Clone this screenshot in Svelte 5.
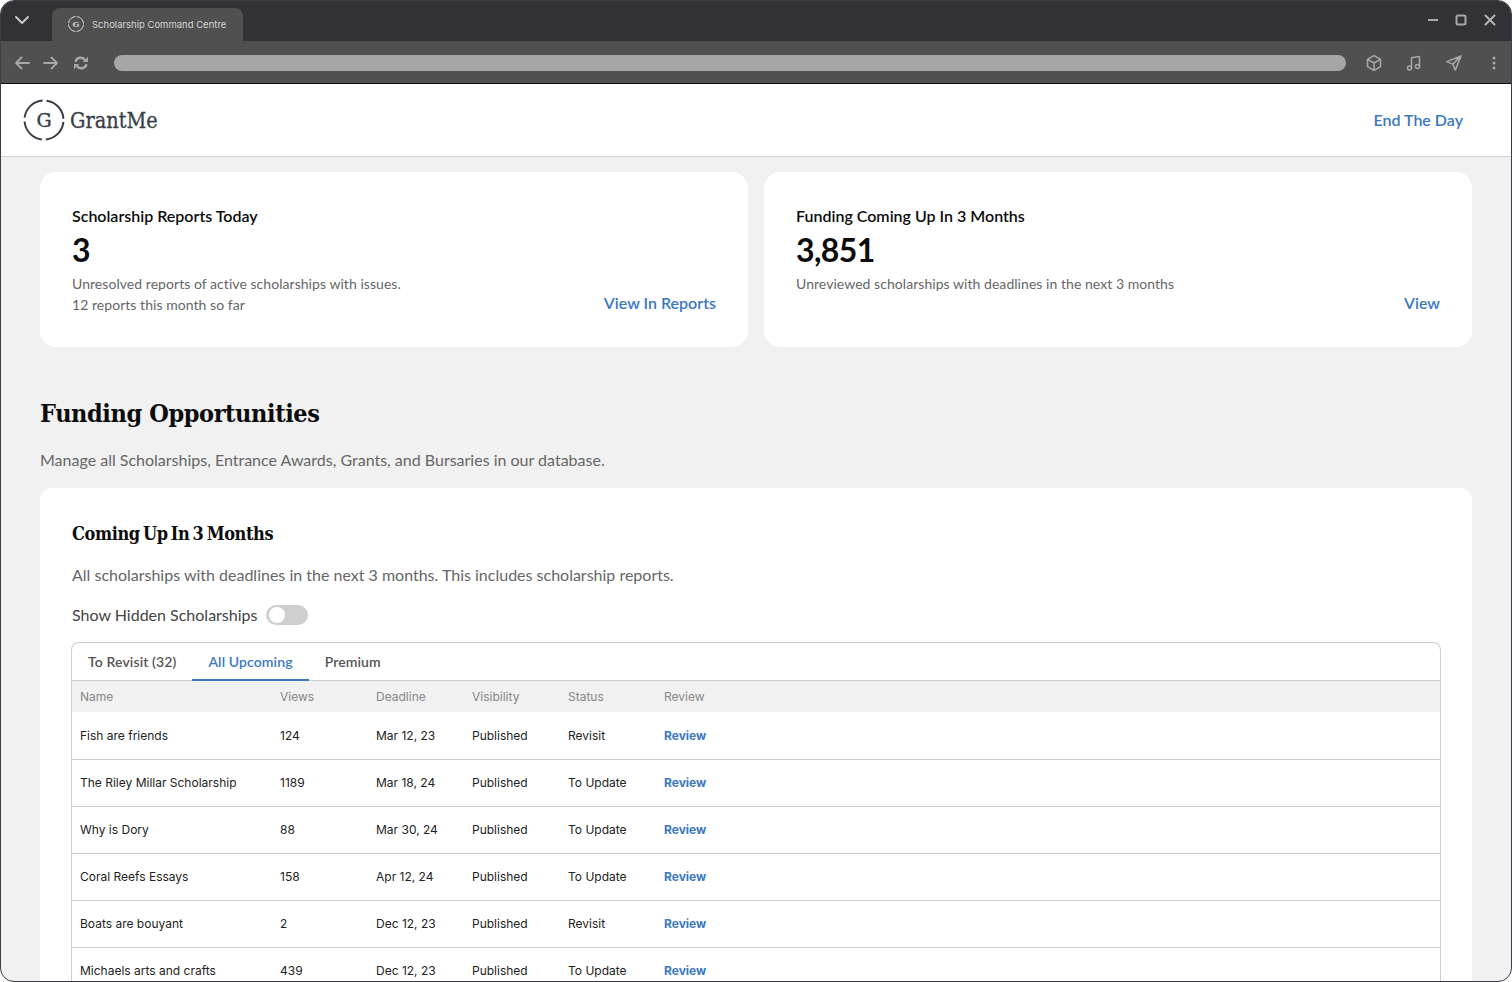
<script>
  const rows = [
    ['Fish are friends', '124', 'Mar 12, 23', 'Published', 'Revisit'],
    ['The Riley Millar Scholarship', '1189', 'Mar 18, 24', 'Published', 'To Update'],
    ['Why is Dory', '88', 'Mar 30, 24', 'Published', 'To Update'],
    ['Coral Reefs Essays', '158', 'Apr 12, 24', 'Published', 'To Update'],
    ['Boats are bouyant', '2', 'Dec 12, 23', 'Published', 'Revisit'],
    ['Michaels arts and crafts', '439', 'Dec 12, 23', 'Published', 'To Update']
  ];
  const heads = ['Name', 'Views', 'Deadline', 'Visibility', 'Status', 'Review'];
</script>

<div class="window">
  <div class="titlebar">
    <svg class="chev" width="16" height="10" viewBox="0 0 16 10"><path d="M2 2l6 6 6-6" fill="none" stroke="#c9c9c9" stroke-width="2" stroke-linecap="round" stroke-linejoin="round"/></svg>
    <div class="tab">
      <svg width="18" height="18" viewBox="0 0 18 18">
        <circle cx="9" cy="9" r="7.5" fill="none" stroke="#d8d8d8" stroke-width="1" stroke-dasharray="10.48 1.3" stroke-dashoffset="-0.65"/>
        <text x="9" y="12" text-anchor="middle" class="tabg">G</text>
      </svg>
      <span>Scholarship Command Centre</span>
    </div>
    <div class="winctl">
      <svg width="10" height="10" viewBox="0 0 10 10"><path d="M0 5h10" stroke="#a8a8a8" stroke-width="2"/></svg>
      <svg width="12" height="12" viewBox="0 0 12 12"><rect x="1.5" y="1.5" width="9" height="9" rx="1.5" fill="none" stroke="#a8a8a8" stroke-width="2"/></svg>
      <svg width="12" height="12" viewBox="0 0 12 12"><path d="M1.5 1.5l9 9M10.5 1.5l-9 9" stroke="#b4b4b4" stroke-width="2" stroke-linecap="round"/></svg>
    </div>
  </div>

  <div class="toolbar">
    <div class="navs">
      <svg width="16" height="14" viewBox="0 0 16 14"><path d="M15 7H2M7.5 1.5L2 7l5.5 5.500" fill="none" stroke="#a8a8a8" stroke-width="1.8" stroke-linecap="round" stroke-linejoin="round"/></svg>
      <svg width="16" height="14" viewBox="0 0 16 14"><path d="M1 7h13M8.500 1.500L14 7l-5.500 5.500" fill="none" stroke="#a8a8a8" stroke-width="1.800" stroke-linecap="round" stroke-linejoin="round"/></svg>
      <svg class="reload" width="16" height="14" viewBox="0 0 16 14"><path d="M2.500 5.800A5.200 5.200 0 0 1 12 4.200M13.500 8.200A5.200 5.200 0 0 1 4 9.800" fill="none" stroke="#a8a8a8" stroke-width="2.400"/><path d="M15 0.800v5.200h-5.200zM1 13.200V8h5.200z" fill="#a8a8a8"/></svg>
    </div>
    <div class="url"></div>
    <div class="tools">
      <svg width="18" height="18" viewBox="0 0 18 18"><path d="M9 1.600l6.500 3.700v7.400L9 16.400l-6.500-3.700V5.300zM2.700 5.400L9 9l6.300-3.600M9 9v7.200" fill="none" stroke="#a8a8a8" stroke-width="1.500" stroke-linejoin="round"/></svg>
      <svg width="18" height="18" viewBox="0 0 18 18"><path d="M6.500 14V3.800l8-1.300V12.500" fill="none" stroke="#a8a8a8" stroke-width="1.500" stroke-linejoin="round"/><circle cx="4.500" cy="14" r="2" fill="none" stroke="#a8a8a8" stroke-width="1.500"/><circle cx="12.500" cy="12.500" r="2" fill="none" stroke="#a8a8a8" stroke-width="1.500"/></svg>
      <svg width="18" height="18" viewBox="0 0 18 18"><path d="M16 2L1.800 7.600l6 2.500 2.500 6z M16 2L7.800 10.100" fill="none" stroke="#a8a8a8" stroke-width="1.500" stroke-linejoin="round"/></svg>
      <svg class="dots" width="4" height="14" viewBox="0 0 4 14"><circle cx="2" cy="2" r="1.500" fill="#a8a8a8"/><circle cx="2" cy="7" r="1.500" fill="#a8a8a8"/><circle cx="2" cy="12" r="1.500" fill="#a8a8a8"/></svg>
    </div>
  </div>

  <header class="apphead">
    <div class="logo">
      <svg width="42" height="42" viewBox="0 0 42 42">
        <circle cx="21" cy="21" r="19.5" fill="none" stroke="#3a3f47" stroke-width="2" stroke-dasharray="26.63 4" stroke-dashoffset="-2" />
        <text x="21" y="27.5" text-anchor="middle" class="logog">G</text>
      </svg>
      <span class="logotext">GrantMe</span>
    </div>
    <a class="endday" href="#end">End The Day</a>
  </header>

  <main class="content">
    <section class="stats">
      <article class="stat">
        <div>
          <h3>Scholarship Reports Today</h3>
          <div class="num">3</div>
          <p>Unresolved reports of active scholarships with issues.<br />12 reports this month so far</p>
        </div>
        <a href="#reports">View In Reports</a>
      </article>
      <article class="stat">
        <div>
          <h3>Funding Coming Up In 3 Months</h3>
          <div class="num">3,851</div>
          <p>Unreviewed scholarships with deadlines in the next 3 months<br />&nbsp;</p>
        </div>
        <a href="#view">View</a>
      </article>
    </section>

    <h1>Funding Opportunities</h1>
    <p class="lead">Manage all Scholarships, Entrance Awards, Grants, and Bursaries in our database.</p>

    <section class="panel">
      <h2>Coming Up In 3 Months</h2>
      <p class="sub">All scholarships with deadlines in the next 3 months. This includes scholarship reports.</p>
      <div class="toggle-row">
        <span>Show Hidden Scholarships</span>
        <span class="toggle"><span class="knob"></span></span>
      </div>
      <div class="tablebox">
        <div class="tabs">
          <span class="t">To Revisit (32)</span>
          <span class="t active">All Upcoming</span>
          <span class="t">Premium</span>
        </div>
        <div class="thead">
          {#each heads as h}<span>{h}</span>{/each}
        </div>
        {#each rows as r}
          <div class="row">
            {#each r as c}<span>{c}</span>{/each}
            <a href="#review">Review</a>
          </div>
        {/each}
      </div>
    </section>
  </main>
</div>

<style>
  :global(body) { margin: 0; background: #fff; overflow: hidden; }
  .window {
    box-sizing: border-box; width: 1512px; height: 982px; display: flex; flex-direction: column;
    overflow: hidden; border: 1px solid #3a3d42; border-radius: 14px; background: #f1f1f1;
    font-family: Lato, sans-serif;
  }
  .titlebar { flex: none; height: 40px; background: #323136; display: flex; align-items: flex-end; position: relative; }
  .chev { position: absolute; left: 13px; top: 14px; }
  .tab {
    margin-left: 51px; width: 191px; height: 33px; box-sizing: border-box; padding: 0 0 1px 15px; background: #505050;
    border-radius: 8px 8px 0 0; display: flex; align-items: center; gap: 7px;
    font: 9.5px Inter, sans-serif; color: #d4d4d4;
  }
  .tabg { font: 700 8px "DejaVu Serif", serif; fill: #d8d8d8; }
  .winctl { margin-left: auto; align-self: flex-start; display: flex; align-items: center; gap: 17px; padding: 13px 15px 0 0; }
  .toolbar { flex: none; height: 43px; box-sizing: border-box; background: #505050; border-bottom: 1px solid #0c0c0c; display: flex; align-items: center; padding: 2px 16px 0 13px; }
  .navs { display: flex; gap: 13px; width: 100px; flex: none; }
  .reload { margin-left: 1px; }
  .url { flex: none; width: 1232px; height: 16px; border-radius: 8px; background: #a6a6a6; }
  .tools { display: flex; align-items: center; gap: 22px; margin-left: 19px; }
  .dots { margin-left: 7px; }
  .apphead {
    flex: none; height: 73px; box-sizing: border-box; background: #fff; border-bottom: 1px solid #d2d2d2;
    display: flex; align-items: center; justify-content: space-between; padding: 0 48px 0 22px;
  }
  .logo { display: flex; align-items: center; gap: 5px; color: #3a3f47; }
  .logog { font: 400 19px "DejaVu Serif", serif; fill: #3a3f47; stroke: #3a3f47; stroke-width: 0.4px; }
  .logotext { font: 500 21.5px "DejaVu Serif Condensed", "DejaVu Serif", serif; -webkit-text-stroke: 0.3px #3a3f47; }
  .endday { font-size: 16px; font-weight: 600; color: #3b78c3; text-decoration: none; padding-bottom: 2px; }
  .content { flex: 1; min-height: 0; overflow: hidden; padding: 15px 39px 0; }
  .stats { display: grid; grid-template-columns: 708px 708px; gap: 16px; }
  .stat {
    height: 175px; box-sizing: border-box; background: #fff; border-radius: 16px; padding: 32px;
    display: flex; justify-content: space-between; align-items: flex-end;
  }
  .stat > div { align-self: flex-start; }
  .stat h3 { margin: 0; font-size: 16px; line-height: 24px; font-weight: 600; color: #0c0c0c; }
  .num { font-size: 32px; line-height: 42px; font-weight: 700; letter-spacing: -0.6px; color: #0c0c0c; margin-top: 1px; }
  .stat p { margin: 2px 0 0; font-size: 14px; line-height: 21px; letter-spacing: 0.05px; color: #666; }
  .stat a { font-size: 16px; font-weight: 600; color: #3b78c3; text-decoration: none; line-height: 24px; }
  h1 { margin: 47px 0 0; font: 700 25px/40px "DejaVu Serif Condensed", "DejaVu Serif", serif; letter-spacing: -0.4px; color: #0c0c0c; }
  .lead { margin: 14px 0 0; font-size: 16px; line-height: 24px; color: #666; }
  .panel { margin-top: 16px; background: #fff; border-radius: 12px 12px 0 0; padding: 32px 31px 0 32px; height: 600px; box-sizing: border-box; }
  h2 { margin: 0; font: 700 18px/28px "DejaVu Serif Condensed", "DejaVu Serif", serif; letter-spacing: -0.4px; word-spacing: -2px; color: #0c0c0c; }
  .sub { margin: 15px 0 0; font-size: 16px; line-height: 24px; color: #666; }
  .toggle-row { margin-top: 16px; display: flex; align-items: center; gap: 9px; font-size: 16px; line-height: 24px; color: #444; }
  .toggle { width: 42px; height: 20px; border-radius: 10px; background: #cfcfcf; position: relative; display: block; }
  .knob { position: absolute; left: 3px; top: 2px; width: 16px; height: 16px; border-radius: 50%; background: #fff; }
  .tablebox { margin: 15px 0 0 -1px; border: 1px solid #cfcfcf; border-bottom: 0; border-radius: 8px 8px 0 0; font: 12px Inter, sans-serif; }
  .tabs { display: flex; height: 37px; border-bottom: 1px solid #cfcfcf; font: 600 14px Lato, sans-serif; letter-spacing: 0.12px; color: #555; }
  .t { padding: 0 16px; line-height: 37px; height: 38px; box-sizing: border-box; }
  .t.active { color: #3b78c3; border-bottom: 2px solid #3b78c3; }
  .thead, .row { display: grid; grid-template-columns: 200px 96px 96px 96px 96px 96px; padding-left: 8px; align-items: center; }
  .thead { height: 31px; margin-bottom: 1px; background: #f1f1f1; color: #888; }
  .row { height: 44px; padding-bottom: 2px; border-bottom: 1px solid #cfcfcf; color: #222; }
  .row a { font-weight: 700; color: #3b78c3; text-decoration: none; }
</style>
